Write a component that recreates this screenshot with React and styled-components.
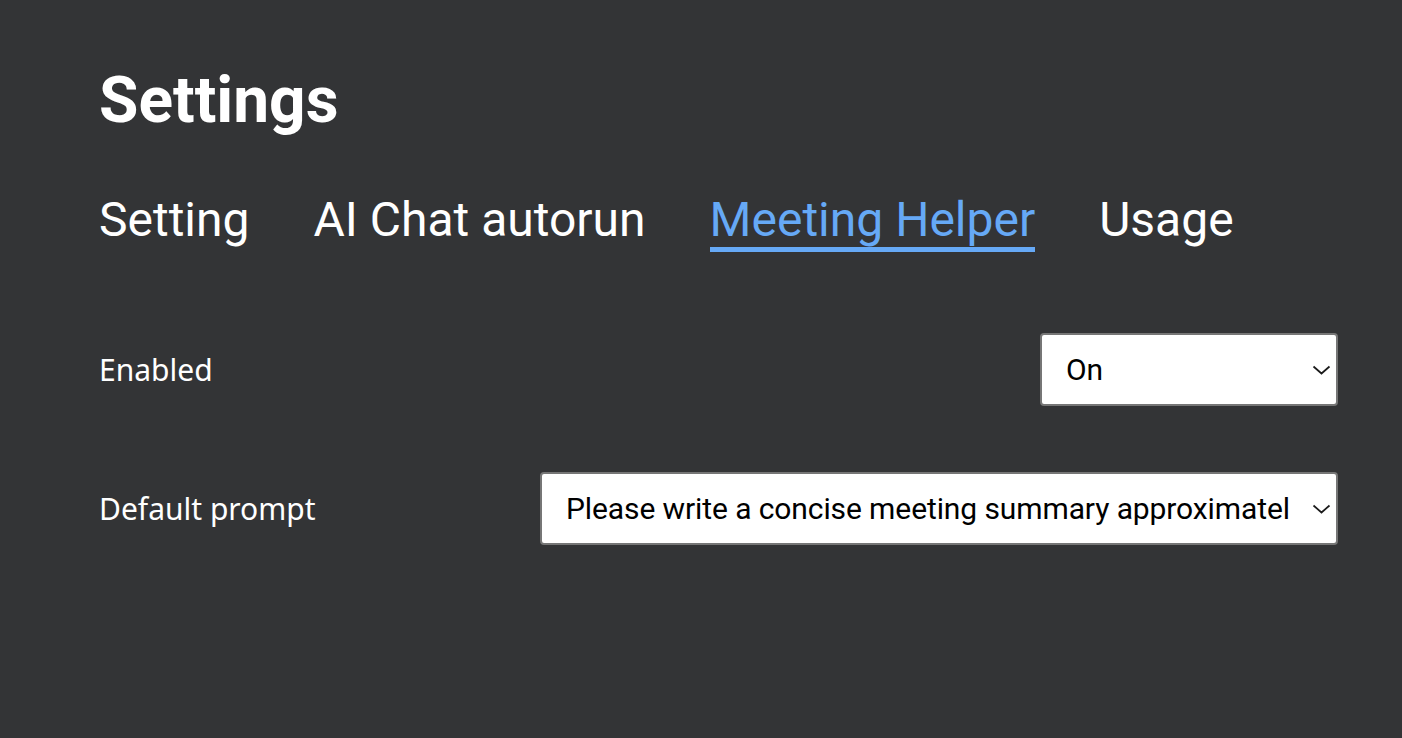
import React, { useState } from "react";
import styled, { createGlobalStyle } from "styled-components";

const GlobalStyle = createGlobalStyle`
  html, body {
    margin: 0;
    padding: 0;
    background: #333436;
  }
  #root {
    min-height: 100vh;
  }
`;

const tabs = ["Setting", "AI Chat autorun", "Meeting Helper", "Usage"];

const prompts = [
  "Please write a concise meeting summary approximately 200 words long",
  "Summarize the key decisions and action items",
];

function Chevron() {
  return (
    <svg width="19" height="10" viewBox="0 0 19 10" fill="none">
      <path d="M1.5 1.5 L9.5 8.5 L17.5 1.5" stroke="#1a1a1a" strokeWidth="1.7" />
    </svg>
  );
}

export default function App() {
  const [active, setActive] = useState(2);
  const [enabled, setEnabled] = useState("On");
  const [prompt, setPrompt] = useState(prompts[0]);

  return (
    <Page>
      <GlobalStyle />
      <Title>Settings</Title>
      <TabBar>
        {tabs.map((t, i) => (
          <Tab key={t} $active={i === active} onClick={() => setActive(i)}>
            {t}
          </Tab>
        ))}
      </TabBar>
      <Rows>
        <Row>
          <Label>Enabled</Label>
          <SelectWrap $width="298px">
            <Select value={enabled} onChange={(e) => setEnabled(e.target.value)}>
              <option>On</option>
              <option>Off</option>
            </Select>
            <Arrow>
              <Chevron />
            </Arrow>
          </SelectWrap>
        </Row>
        <Row>
          <Label>Default prompt</Label>
          <SelectWrap $width="798px">
            <Select value={prompt} onChange={(e) => setPrompt(e.target.value)}>
              {prompts.map((p) => (
                <option key={p}>{p}</option>
              ))}
            </Select>
            <Arrow>
              <Chevron />
            </Arrow>
          </SelectWrap>
        </Row>
      </Rows>
    </Page>
  );
}

const Page = styled.div`
  padding: 64px 64px 0 99px;
  color: #ffffff;
  font-family: Roboto, "Liberation Sans", sans-serif;
`;

const Title = styled.h1`
  margin: 0;
  font-size: 64px;
  font-weight: 700;
  line-height: 74px;
`;

const TabBar = styled.div`
  display: flex;
  gap: 64px;
  margin-top: 55px;
`;

const Tab = styled.div`
  font-size: 48px;
  line-height: 54px;
  color: ${(p) => (p.$active ? "#66a9f6" : "#ffffff")};
  border-bottom: 5px solid ${(p) => (p.$active ? "#66a9f6" : "transparent")};
  cursor: pointer;
`;

const Rows = styled.div`
  display: flex;
  flex-direction: column;
  gap: 66px;
  margin-top: 81px;
`;

const Row = styled.div`
  display: flex;
  align-items: center;
  justify-content: space-between;
`;

const Label = styled.div`
  font-family: "Noto Sans", sans-serif;
  font-size: 30px;
`;

const SelectWrap = styled.div`
  position: relative;
  width: ${(p) => p.$width};
`;

const Select = styled.select`
  appearance: none;
  width: 100%;
  height: 73px;
  box-sizing: border-box;
  padding: 0 47px 0 24px;
  border: 2px solid #767676;
  border-radius: 4px;
  background: #ffffff;
  color: #000000;
  font-family: Roboto, "Liberation Sans", sans-serif;
  font-size: 30px;
  letter-spacing: -0.1px;
  outline: none;
`;

const Arrow = styled.span`
  position: absolute;
  right: 7px;
  top: 50%;
  transform: translateY(-50%);
  display: flex;
  pointer-events: none;
`;
